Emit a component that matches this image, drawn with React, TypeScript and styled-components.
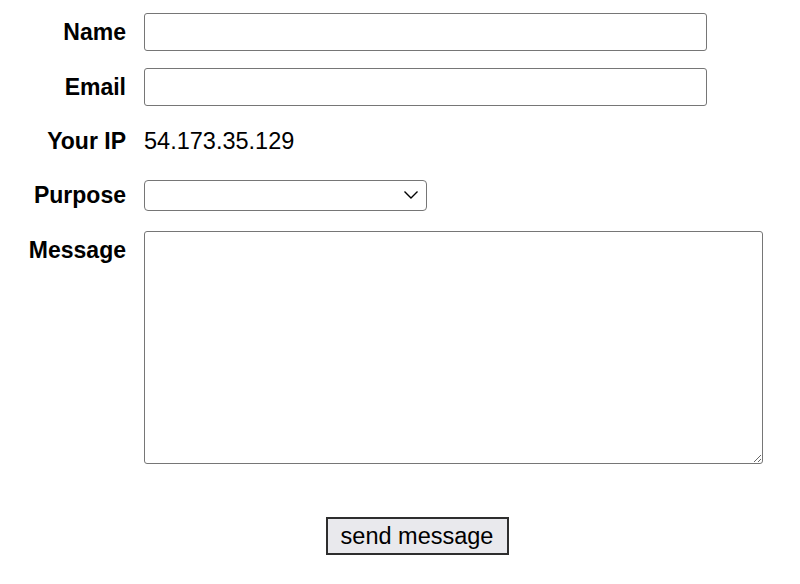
import React from "react";
import styled, { createGlobalStyle } from "styled-components";

const Global = createGlobalStyle`
  html, body { margin: 0; padding: 0; background: #fff; }
  body { font-family: "Liberation Sans", Arial, sans-serif; color: #000; }
`;

const Form = styled.form`
  display: grid;
  grid-template-columns: 126px 1fr;
  column-gap: 18px;
  row-gap: 17px;
  padding-top: 13px;
  width: 800px;
  box-sizing: border-box;
`;

const Label = styled.label<{ $top?: boolean }>`
  font-size: 23px;
  font-weight: bold;
  text-align: right;
  display: flex;
  justify-content: flex-end;
  align-items: ${(p) => (p.$top ? "flex-start" : "center")};
  padding-top: ${(p) => (p.$top ? "6px" : "1px")};
  white-space: nowrap;
`;

const Field = styled.div<{ $h?: number }>`
  display: flex;
  align-items: center;
  min-height: ${(p) => (p.$h ? `${p.$h}px` : "auto")};
`;

const TextInput = styled.input`
  width: 563px;
  height: 38px;
  box-sizing: border-box;
  border: 1px solid #767676;
  border-radius: 3px;
  font-family: "Liberation Sans", Arial, sans-serif;
  font-size: 18px;
  padding: 0 6px;
  background: #fff;
  outline: none;
`;

const Value = styled.span`
  font-size: 23.5px;
  line-height: 36px;
`;

const SelectWrap = styled.div`
  position: relative;
  width: 283px;
  height: 31px;
`;

const Select = styled.select`
  appearance: none;
  width: 100%;
  height: 100%;
  box-sizing: border-box;
  border: 1px solid #767676;
  border-radius: 4px;
  background: #fff;
  font-family: "Liberation Sans", Arial, sans-serif;
  font-size: 18px;
  outline: none;
`;

const Chevron = styled.svg`
  position: absolute;
  right: 8px;
  top: 9px;
  pointer-events: none;
`;

const TextArea = styled.textarea`
  width: 619px;
  height: 233px;
  box-sizing: border-box;
  border: 1px solid #767676;
  border-radius: 3px;
  font-family: "Liberation Sans", Arial, sans-serif;
  font-size: 18px;
  outline: none;
  display: block;
`;

const ButtonRow = styled.div`
  grid-column: 1 / -1;
  display: flex;
  justify-content: center;
  padding-left: 34px;
  margin-top: 36px;
`;

const SendButton = styled.button`
  width: 183px;
  height: 38px;
  box-sizing: border-box;
  border: 2px solid #2e2e2e;
  background: #e9e9ed;
  font-family: "Liberation Sans", Arial, sans-serif;
  font-size: 23.5px;
  color: #000;
  padding: 0;
  border-radius: 0;
`;

export default function App() {
  return (
    <>
      <Global />
      <Form onSubmit={(e) => e.preventDefault()}>
        <Label htmlFor="name">Name</Label>
        <Field>
          <TextInput id="name" type="text" />
        </Field>
        <Label htmlFor="email">Email</Label>
        <Field>
          <TextInput id="email" type="text" />
        </Field>
        <Label>Your IP</Label>
        <Field $h={36}>
          <Value>54.173.35.129</Value>
        </Field>
        <Label htmlFor="purpose">Purpose</Label>
        <Field $h={38}>
          <SelectWrap>
            <Select id="purpose" defaultValue="">
              <option value=""></option>
            </Select>
            <Chevron width="16" height="12" viewBox="0 0 16 12">
              <path d="M1.5 2.5 L8 9 L14.5 2.5" fill="none" stroke="#000" strokeWidth="1.4" />
            </Chevron>
          </SelectWrap>
        </Field>
        <Label htmlFor="message" $top>
          Message
        </Label>
        <Field>
          <TextArea id="message" />
        </Field>
        <ButtonRow>
          <SendButton type="submit">send message</SendButton>
        </ButtonRow>
      </Form>
    </>
  );
}
